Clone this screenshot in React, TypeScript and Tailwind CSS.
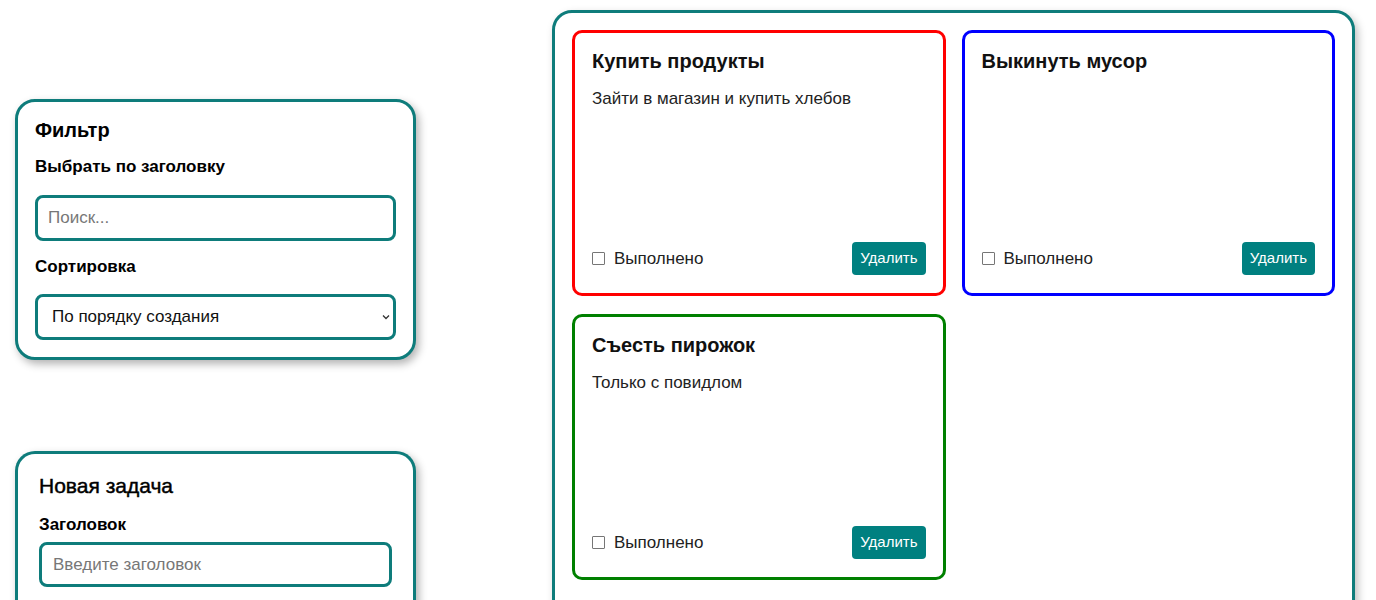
import React from "react";

const tasks = [
  { title: "Купить продукты", desc: "Зайти в магазин и купить хлебов", color: "border-[#ff0000]" },
  { title: "Выкинуть мусор", desc: "", color: "border-[#0000ff]" },
  { title: "Съесть пирожок", desc: "Только с повидлом", color: "border-[#008000]" },
];

function TaskCard({ title, desc, color }: { title: string; desc: string; color: string }) {
  return (
    <div className={`flex h-[266px] flex-col rounded-[10px] border-[3px] ${color} bg-white px-[17px] pt-[14px] pb-[18px]`}>
      <h3 className="text-[20px] font-bold leading-[28px] text-[#111]">{title}</h3>
      <p className="mt-[14px] text-[17px] leading-[20px] text-[#222]">{desc}</p>
      <div className="mt-auto flex items-center justify-between">
        <label className="flex items-center gap-[9px] text-[17px] text-[#222]">
          <span className="inline-block h-[13px] w-[13px] rounded-[1px] border border-[#767676] bg-white" />
          Выполнено
        </label>
        <button className="h-[33px] rounded-[4px] bg-[#008080] px-[8px] text-[15px] text-white">Удалить</button>
      </div>
    </div>
  );
}

export default function App() {
  return (
    <div className="flex min-h-[600px] bg-white font-['Liberation_Sans',Arial,sans-serif] text-black">
      <div className="ml-[15px] mt-[99px] flex w-[401px] flex-col">
        <div className="rounded-[20px] border-[3px] border-[#0e7c7b] bg-white px-[17px] pt-[14px] pb-[17px] shadow-[3px_4px_8px_rgba(0,0,0,0.3)]">
          <h2 className="text-[20px] font-bold leading-[28px]">Фильтр</h2>
          <div className="mt-[13px] text-[17px] font-bold leading-[20px]">Выбрать по заголовку</div>
          <div className="mt-[18px] flex h-[46px] items-center rounded-[8px] border-[3px] border-[#0e7c7b] px-[10px] text-[17px] text-[#777]">
            Поиск...
          </div>
          <div className="mt-[16px] text-[17px] font-bold leading-[20px]">Сортировка</div>
          <div className="mt-[17px] flex h-[46px] items-center justify-between rounded-[8px] border-[3px] border-[#0e7c7b] pl-[14px] pr-[2px] text-[17px] text-[#111]">
            <span>По порядку создания</span>
            <svg width="10" height="10" viewBox="0 0 10 10" fill="none" stroke="#333" strokeWidth="1.3">
              <path d="M2 3.5 L5 6.5 L8 3.5" />
            </svg>
          </div>
        </div>
        <div className="mt-[91px] rounded-t-[20px] border-[3px] border-b-0 border-[#0e7c7b] bg-white px-[21px] pt-[18px] pb-[20px] shadow-[3px_4px_8px_rgba(0,0,0,0.3)]">
          <h2 className="text-[21px] leading-[28px] [-webkit-text-stroke:0.45px_black]">Новая задача</h2>
          <div className="mt-[15px] text-[17px] font-bold leading-[20px]">Заголовок</div>
          <div className="mt-[7px] flex h-[45px] items-center rounded-[8px] border-[3px] border-[#0e7c7b] px-[11px] text-[17px] text-[#777]">
            Введите заголовок
          </div>
          <div className="h-[40px]" />
        </div>
      </div>
      <div className="ml-[136px] mt-[10px] w-[803px] self-start rounded-[20px] border-[3px] border-[#0e7c7b] bg-white px-[17px] pt-[17px] pb-[40px] shadow-[3px_4px_8px_rgba(0,0,0,0.25)]">
        <div className="grid grid-cols-2 gap-x-[16px] gap-y-[18px]">
          {tasks.map((t) => (
            <TaskCard key={t.title} {...t} />
          ))}
        </div>
      </div>
    </div>
  );
}
